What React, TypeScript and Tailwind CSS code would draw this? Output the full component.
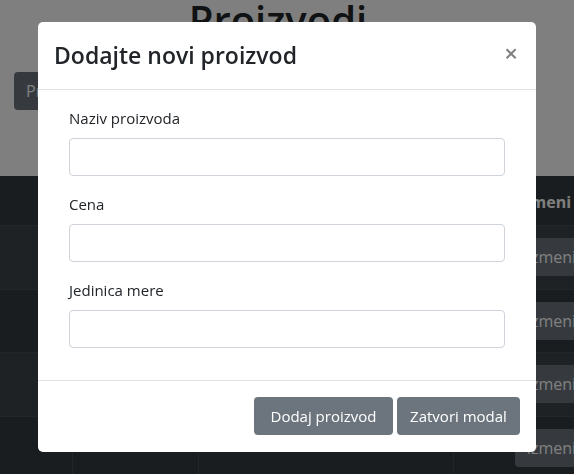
import React from "react";

// Table rows behind the modal — mostly hidden, only the "Izmeni" column peeks out.
const ROWS = [
  { id: 1, naziv: "Hleb", cena: "65", jedinica: "kom" },
  { id: 2, naziv: "Mleko", cena: "120", jedinica: "l" },
  { id: 3, naziv: "Šećer", cena: "110", jedinica: "kg" },
  { id: 4, naziv: "Jaja", cena: "25", jedinica: "kom" },
];

const FIELDS = ["Naziv proizvoda", "Cena", "Jedinica mere"];

export default function App() {
  return (
    <div className="relative min-h-screen overflow-hidden bg-white font-['Open_Sans',sans-serif] text-[#212529]">
      <main>
        <h1 className="-mt-[4px] pr-[18px] text-center text-[40px] font-semibold leading-[48px]">
          Proizvodi
        </h1>
        <div className="mt-[28px] px-[14px]">
          <button className="h-[38px] rounded bg-[#6c757d] px-3 text-[16px] text-white">
            Prikaži sve
          </button>
        </div>
        <table className="mt-[66px] w-[620px] table-fixed border-collapse bg-[#343a40] text-[16px] text-white">
          <colgroup>
            <col className="w-[72px]" />
            <col className="w-[126px]" />
            <col className="w-[255px]" />
            <col />
          </colgroup>
          <thead>
            <tr className="h-[49px] border-b border-[#454d55]">
              <th className="border-r border-[#454d55] px-3 pt-[14px] text-right align-top font-bold">#</th>
              <th className="border-r border-[#454d55] px-3 pt-[14px] text-left align-top font-bold">Naziv</th>
              <th className="border-r border-[#454d55] px-3 pt-[14px] text-left align-top font-bold">Cena</th>
              <th className="pl-[64px] pt-[14px] text-left align-top font-bold">Izmeni</th>
            </tr>
          </thead>
          <tbody>
            {ROWS.map((r, i) => (
              <tr
                key={r.id}
                className={
                  i % 2 === 0
                    ? "h-[64px] border-b border-[#454d55] bg-[#3e444a]"
                    : "h-[63px] border-b border-[#454d55]"
                }
              >
                <td className="border-r border-[#454d55] px-3 pt-3 text-right align-top">{r.id}</td>
                <td className="border-r border-[#454d55] px-3 pt-3 align-top">{r.naziv}</td>
                <td className="border-r border-[#454d55] px-3 pt-3 align-top">
                  {r.cena} / {r.jedinica}
                </td>
                <td className="pl-[61px] pt-3 align-top">
                  <button className="h-[38px] rounded bg-[#6c757d] px-3 text-white">
                    Izmeni
                  </button>
                </td>
              </tr>
            ))}
          </tbody>
        </table>
      </main>

      {/* backdrop */}
      <div className="fixed inset-0 z-10 bg-black/50" />

      {/* modal */}
      <div className="fixed inset-0 z-20 flex justify-center pt-[22px]">
        <div className="h-[430px] w-[498px] rounded-[5px] bg-white">
          <div className="flex h-[68px] items-center justify-between border-b border-[#dee2e6] pl-[16px] pr-[18px]">
            <h5 className="text-[23px] font-semibold leading-[29px]">Dodajte novi proizvod</h5>
            <button className="-mt-[6px] text-[24px] font-semibold leading-none text-black opacity-50">
              ×
            </button>
          </div>
          <div className="px-[31px] pt-4 pb-4">
            {FIELDS.map((f) => (
              <div key={f} className="mb-4">
                <label className="mb-2 block text-[15px] leading-6">{f}</label>
                <input
                  type="text"
                  className="block h-[38px] w-full rounded border border-[#ced4da] px-3 outline-none"
                />
              </div>
            ))}
          </div>
          <div className="flex justify-end gap-1 border-t border-[#dee2e6] p-4">
            <button className="h-[38px] w-[139px] rounded bg-[#6c757d] text-[15px] text-white">
              Dodaj proizvod
            </button>
            <button className="h-[38px] w-[123px] rounded bg-[#6c757d] text-[15px] text-white">
              Zatvori modal
            </button>
          </div>
        </div>
      </div>
    </div>
  );
}
